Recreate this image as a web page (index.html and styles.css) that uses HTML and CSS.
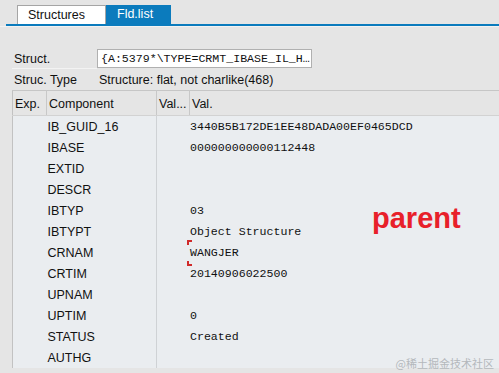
FILE: index.html
```html
<!DOCTYPE html>
<html lang="en">
<head>
  <meta charset="UTF-8">
  <meta name="viewport" content="width=device-width, initial-scale=1.0">
  <title>Fld.list</title>
  <link rel="stylesheet" href="styles.css">
</head>
<body>

  <div class="tab-bar">
    <div class="tab tab-structures">Structures</div>
    <div class="tab tab-active">Fld.list</div>
  </div>
  <div class="tab-shadow"></div>

  <div class="fields">
    <div class="field-row field-struct">
      <span class="field-label">Struct.</span>
      <span class="field-input">{A:5379*\TYPE=CRMT_IBASE_IL_H…</span>
    </div>
    <div class="field-row">
      <span class="field-label">Struc. Type</span>
      <span class="field-value">Structure: flat, not charlike(468)</span>
    </div>
  </div>

  <table class="fld-table">
    <thead>
      <tr>
        <th class="col-exp">Exp.</th>
        <th class="col-comp">Component</th>
        <th class="col-vt">Val...</th>
        <th class="col-val">Val.</th>
      </tr>
    </thead>
    <tbody>
      <tr><td></td><td>IB_GUID_16</td><td colspan="2" class="val">3440B5B172DE1EE48DADA00EF0465DCD</td></tr>
      <tr><td></td><td>IBASE</td><td colspan="2" class="val">000000000000112448</td></tr>
      <tr><td></td><td>EXTID</td><td colspan="2" class="val"></td></tr>
      <tr><td></td><td>DESCR</td><td colspan="2" class="val"></td></tr>
      <tr><td></td><td>IBTYP</td><td colspan="2" class="val">03</td></tr>
      <tr><td></td><td>IBTYPT</td><td colspan="2" class="val">Object Structure</td></tr>
      <tr><td></td><td>CRNAM</td><td colspan="2" class="val"><span class="marked">WANGJER</span></td></tr>
      <tr><td></td><td>CRTIM</td><td colspan="2" class="val">20140906022500</td></tr>
      <tr><td></td><td>UPNAM</td><td colspan="2" class="val"></td></tr>
      <tr><td></td><td>UPTIM</td><td colspan="2" class="val">0</td></tr>
      <tr><td></td><td>STATUS</td><td colspan="2" class="val">Created</td></tr>
      <tr><td></td><td>AUTHG</td><td colspan="2" class="val"></td></tr>
    </tbody>
  </table>

  <div class="note">parent</div>
  <div class="watermark">@稀土掘金技术社区</div>

</body>
</html>
```

FILE: styles.css
```css
body {
  margin: 0;
  background-color: #e5e5e5;
  font-family: "Liberation Sans", Arial, sans-serif;
  font-size: 12.5px;
  color: #111;
  overflow: hidden;
}

/* tabs */
.tab-bar {
  display: flex;
  margin-left: 6px;
  padding: 5px 0 0 11px;
  height: 19px;
  border-bottom: 2px solid #0b7bbd;
}

.tab {
  height: 19px;
  line-height: 19px;
  box-sizing: border-box;
}

.tab-structures {
  width: 89px;
  padding-left: 10px;
  background-color: #fff;
  border: 1px solid #a5a5a5;
  border-bottom: none;
  line-height: 18px;
}

.tab-active {
  width: 65px;
  padding-left: 11px;
  background-color: #0b7bbd;
  color: #fff;
}

.tab-shadow {
  height: 1px;
  background-color: #f2f2f2;
}

/* header fields */
.fields {
  margin: 22px 0 0 12px;
}

.field-row {
  display: flex;
  align-items: center;
  height: 21px;
}

.field-struct {
  height: 19px;
  border-bottom: 1px solid #f3f3f3;
  width: 85px;
  overflow: visible;
}

.field-label {
  flex: 0 0 83px;
  padding-left: 2px;
}

.field-input {
  flex: 0 0 auto;
  box-sizing: border-box;
  width: 215px;
  height: 19px;
  line-height: 17px;
  padding-left: 3px;
  background-color: #fff;
  border: 1px solid #b0b0b0;
  font-family: "Liberation Mono", "Courier New", monospace;
  font-size: 11.6px;
  white-space: nowrap;
}

.field-value {
  padding-left: 2px;
  white-space: nowrap;
}

/* field list */
.fld-table {
  margin-left: 12px;
  width: 487px;
  border-collapse: collapse;
  border-top: 1px solid #c6c6c6;
  border-left: 1px solid #c2c2c2;
  table-layout: fixed;
}

.fld-table th {
  height: 23px;
  padding: 1px 0 0 2px;
  text-align: left;
  font-weight: normal;
  background-color: #e5e5e5;
  border-right: 1px solid #c8c8c8;
  border-bottom: 1px solid #d2d2d2;
  white-space: nowrap;
  overflow: hidden;
}

.col-exp { width: 31px; }
.col-comp { width: 107px; }
.col-vt { width: 30px; }
.fld-table th.col-val { border-right: none; }

.fld-table td {
  height: 21px;
  padding: 0;
  background-color: #eaedf0;
  white-space: nowrap;
}

.fld-table td:nth-child(2) {
  padding-left: 1px;
  border-right: 1px solid #cfd2d5;
}

.fld-table td.val {
  padding-left: 33px;
  font-family: "Liberation Mono", "Courier New", monospace;
  font-size: 11.6px;
}

.marked {
  position: relative;
}

.marked::before,
.marked::after {
  content: "";
  position: absolute;
  left: -3px;
  box-sizing: border-box;
  width: 5px;
  height: 5px;
  border-left: 2px solid #d02a2a;
}

.marked::before {
  top: -6px;
  border-top: 2px solid #d02a2a;
}

.marked::after {
  bottom: -7px;
  border-bottom: 2px solid #d02a2a;
}

/* annotations */
.note {
  position: absolute;
  left: 372px;
  top: 204px;
  font-size: 29px;
  line-height: 1;
  font-weight: bold;
  color: #e8202a;
}

.watermark {
  position: absolute;
  right: 5px;
  bottom: 2px;
  font-family: "Noto Sans CJK SC", sans-serif;
  font-size: 11px;
  color: #b4b8bc;
}
```
